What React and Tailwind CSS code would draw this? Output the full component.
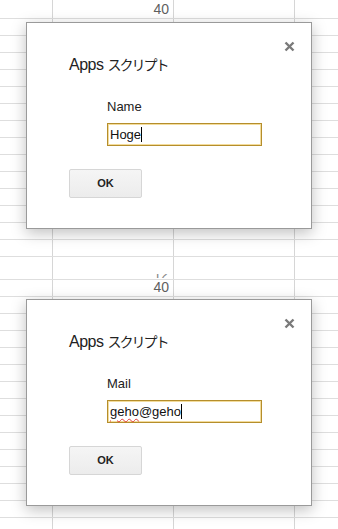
import React from "react";

const font = { fontFamily: '"Liberation Sans", Arial, "Noto Sans CJK JP", sans-serif' };

const Row = ({ h, children }) => (
  <div className={`flex border-b border-[#dedede] ${h}`}>
    <div className="w-[53px] shrink-0 border-r border-[#d6d6d6]" />
    <div className="w-[121px] shrink-0 border-r border-[#d6d6d6] flex justify-end items-end pr-[4px] overflow-hidden">
      {children}
    </div>
    <div className="w-[121px] shrink-0 border-r border-[#d6d6d6]" />
    <div className="flex-1" />
  </div>
);

const Dialog = ({ top, label, value, misspelled }) => (
  <div
    className={`absolute left-[26px] ${top} w-[286px] h-[207px] bg-white border border-[#9a9a9a] shadow-[0_4px_14px_rgba(0,0,0,0.25)] pt-[32px] pl-[42px]`}
  >
    <svg
      className="absolute top-[18px] right-[16px]"
      width="11"
      height="11"
      viewBox="0 0 11 11"
    >
      <path d="M1.5 1.5 L9.5 9.5 M9.5 1.5 L1.5 9.5" stroke="#7a7a7a" strokeWidth="2.4" />
    </svg>

    <div className="h-[20px] text-[16px] leading-[20px] text-[#222] tracking-[-0.5px]">
      Apps <span className="text-[14px] tracking-[-2px]">スクリプト</span>
    </div>

    <div className="mt-[24px] ml-[38px]">
      <div className="h-[16px] text-[13px] leading-[16px] text-[#222]">{label}</div>
      <div className="mt-[8px] w-[155px] h-[23px] border border-[#b58e2c] shadow-[inset_0_0_0_1px_#f3dc9c] flex items-center pl-[2px] text-[13px] text-[#111]">
        {misspelled ? (
          <span>
            <span className="underline decoration-wavy decoration-[#e23a3a] decoration-1 underline-offset-2">geho</span>
            @geho
          </span>
        ) : (
          <span>{value}</span>
        )}
        <span className="inline-block w-px h-[15px] bg-black" />
      </div>
    </div>

    <button className="mt-[23px] w-[73px] h-[29px] rounded-[2px] border border-[#d6d6d6] bg-[linear-gradient(#f5f5f5,#ececec)] text-[11px] font-bold text-[#222] flex items-center justify-center">
      OK
    </button>
  </div>
);

export default function App() {
  const rows1 = Array.from({ length: 15 });
  const rows2 = Array.from({ length: 14 });

  return (
    <div className="w-[338px] h-[529px] bg-white overflow-hidden" style={font}>
      <div className="relative h-[263px] overflow-hidden">
        <Row h="h-[19px]">
          <span className="mb-[2px] text-[14px] leading-none text-[#5f5f5f]">40</span>
        </Row>
        {rows1.map((_, i) => (
          <Row key={i} h="h-[17px]" />
        ))}
        <Dialog top="top-[22px]" label="Name" value="Hoge" />
      </div>

      <div className="relative h-[266px] overflow-hidden">
        <Row h="h-[17px]">
          <span className="mb-[1px] block h-[4px] overflow-hidden">
            <span className="block -mt-[7px] text-[14px] leading-none text-[#8a8a8a]">12</span>
          </span>
        </Row>
        <Row h="h-[17px]">
          <span className="mb-[2px] text-[14px] leading-none text-[#5f5f5f]">40</span>
        </Row>
        {rows2.map((_, i) => (
          <Row key={i} h="h-[17px]" />
        ))}
        <Dialog top="top-[36px]" label="Mail" misspelled />
      </div>
    </div>
  );
}
